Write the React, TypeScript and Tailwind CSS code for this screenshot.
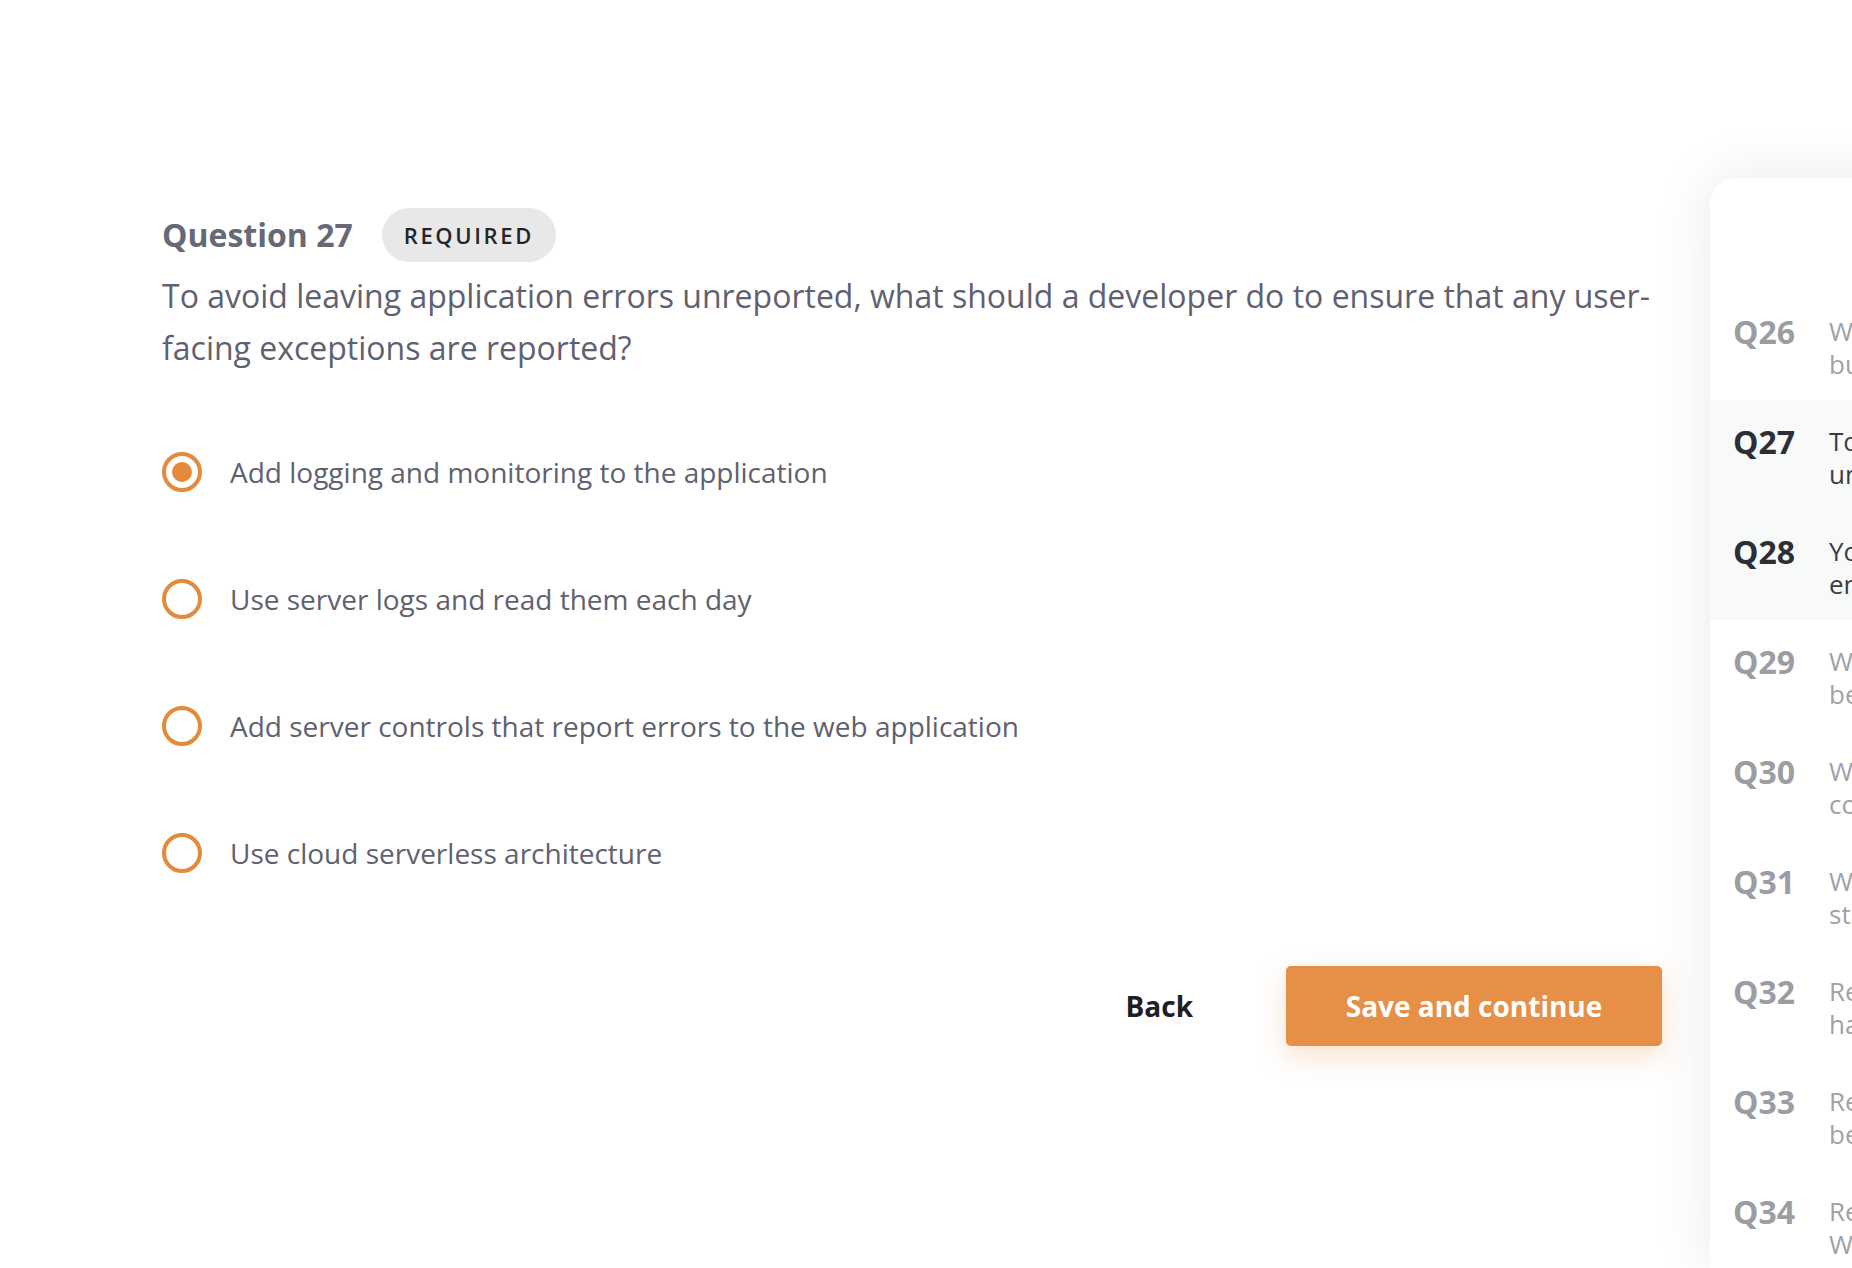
const options = [
  "Add logging and monitoring to the application",
  "Use server logs and read them each day",
  "Add server controls that report errors to the web application",
  "Use cloud serverless architecture",
];

const sideItems = [
  { n: "Q26", lines: ["What is the best way to handle", "bugs reported by your users?"], active: false },
  { n: "Q27", lines: ["To avoid leaving application errors", "unreported, what should a developer"], active: true },
  { n: "Q28", lines: ["You are building a web application", "end to end and need to test it"], active: true },
  { n: "Q29", lines: ["Which of the following would be", "best suited for the job?"], active: false },
  { n: "Q30", lines: ["What is the main purpose of a", "continuous integration pipeline?"], active: false },
  { n: "Q31", lines: ["Which tool helps keep the", "state of an application?"], active: false },
  { n: "Q32", lines: ["Review the code below that", "handles user input"], active: false },
  { n: "Q33", lines: ["Review the snippet and decide", "best approach for testing"], active: false },
  { n: "Q34", lines: ["Read the following scenario.", "What should the team do?"], active: false },
];

function Radio({ checked }: { checked: boolean }) {
  return (
    <span className="w-[40px] h-[40px] rounded-full border-[4px] border-[#e58a3c] flex items-center justify-center shrink-0">
      {checked && <span className="w-[20px] h-[20px] rounded-full bg-[#e58a3c]" />}
    </span>
  );
}

export default function App() {
  return (
    <div
      className="w-[1852px] h-[1268px] overflow-hidden bg-white flex"
      style={{ fontFamily: '"Open Sans", "Noto Sans", sans-serif' }}
    >
      <main className="w-[1710px] shrink-0 pl-[162px] pr-[48px] pt-[208px]">
        <div className="flex items-center gap-[29px] h-[54px]">
          <h2 className="text-[32px] font-bold text-[#676977] leading-none">Question 27</h2>
          <span className="h-[54px] px-[22px] rounded-full bg-[#e8e8e9] flex items-center text-[22px] font-semibold tracking-[0.12em] text-[#24252a]">
            REQUIRED
          </span>
        </div>
        <p className="mt-[8px] text-[32px] leading-[52px] text-[#5f6170]">
          To avoid leaving application errors unreported, what should a developer do to ensure that any user-facing exceptions are reported?
        </p>

        <div className="mt-[78px] flex flex-col gap-[87px]">
          {options.map((o, i) => (
            <label key={o} className="flex items-center gap-[28px] h-[40px]">
              <Radio checked={i === 0} />
              <span className="text-[28px] text-[#5f6170]">{o}</span>
            </label>
          ))}
        </div>

        <div className="mt-[93px] flex items-center justify-end">
          <button className="text-[28px] font-bold text-[#1f2024] mr-[93px]">Back</button>
          <button className="w-[376px] h-[80px] rounded-[5px] bg-[#e58f47] text-white text-[28px] font-bold shadow-[0_10px_28px_rgba(229,143,71,0.28)]">
            Save and continue
          </button>
        </div>
      </main>

      <aside className="w-[420px] shrink-0 mt-[178px] rounded-tl-[26px] bg-white shadow-[0_0_60px_rgba(0,0,0,0.09)] pt-[112px]">
        {sideItems.map((s) => (
          <div
            key={s.n}
            className={`h-[110px] flex gap-[30px] pl-[23px] pt-[21px] ${s.active ? "bg-[#f8f9f9]" : ""}`}
          >
            <span
              className={`w-[66px] shrink-0 text-[32px] font-bold leading-[42px] ${s.active ? "text-[#2d2f36]" : "text-[#9c9da2]"}`}
            >
              {s.n}
            </span>
            <div className={`pt-[4px] text-[26px] leading-[33px] ${s.active ? "text-[#3a3c44]" : "text-[#a0a1a6]"}`}>
              {s.lines.map((l) => (
                <div key={l} className="whitespace-nowrap">{l}</div>
              ))}
            </div>
          </div>
        ))}
      </aside>
    </div>
  );
}
